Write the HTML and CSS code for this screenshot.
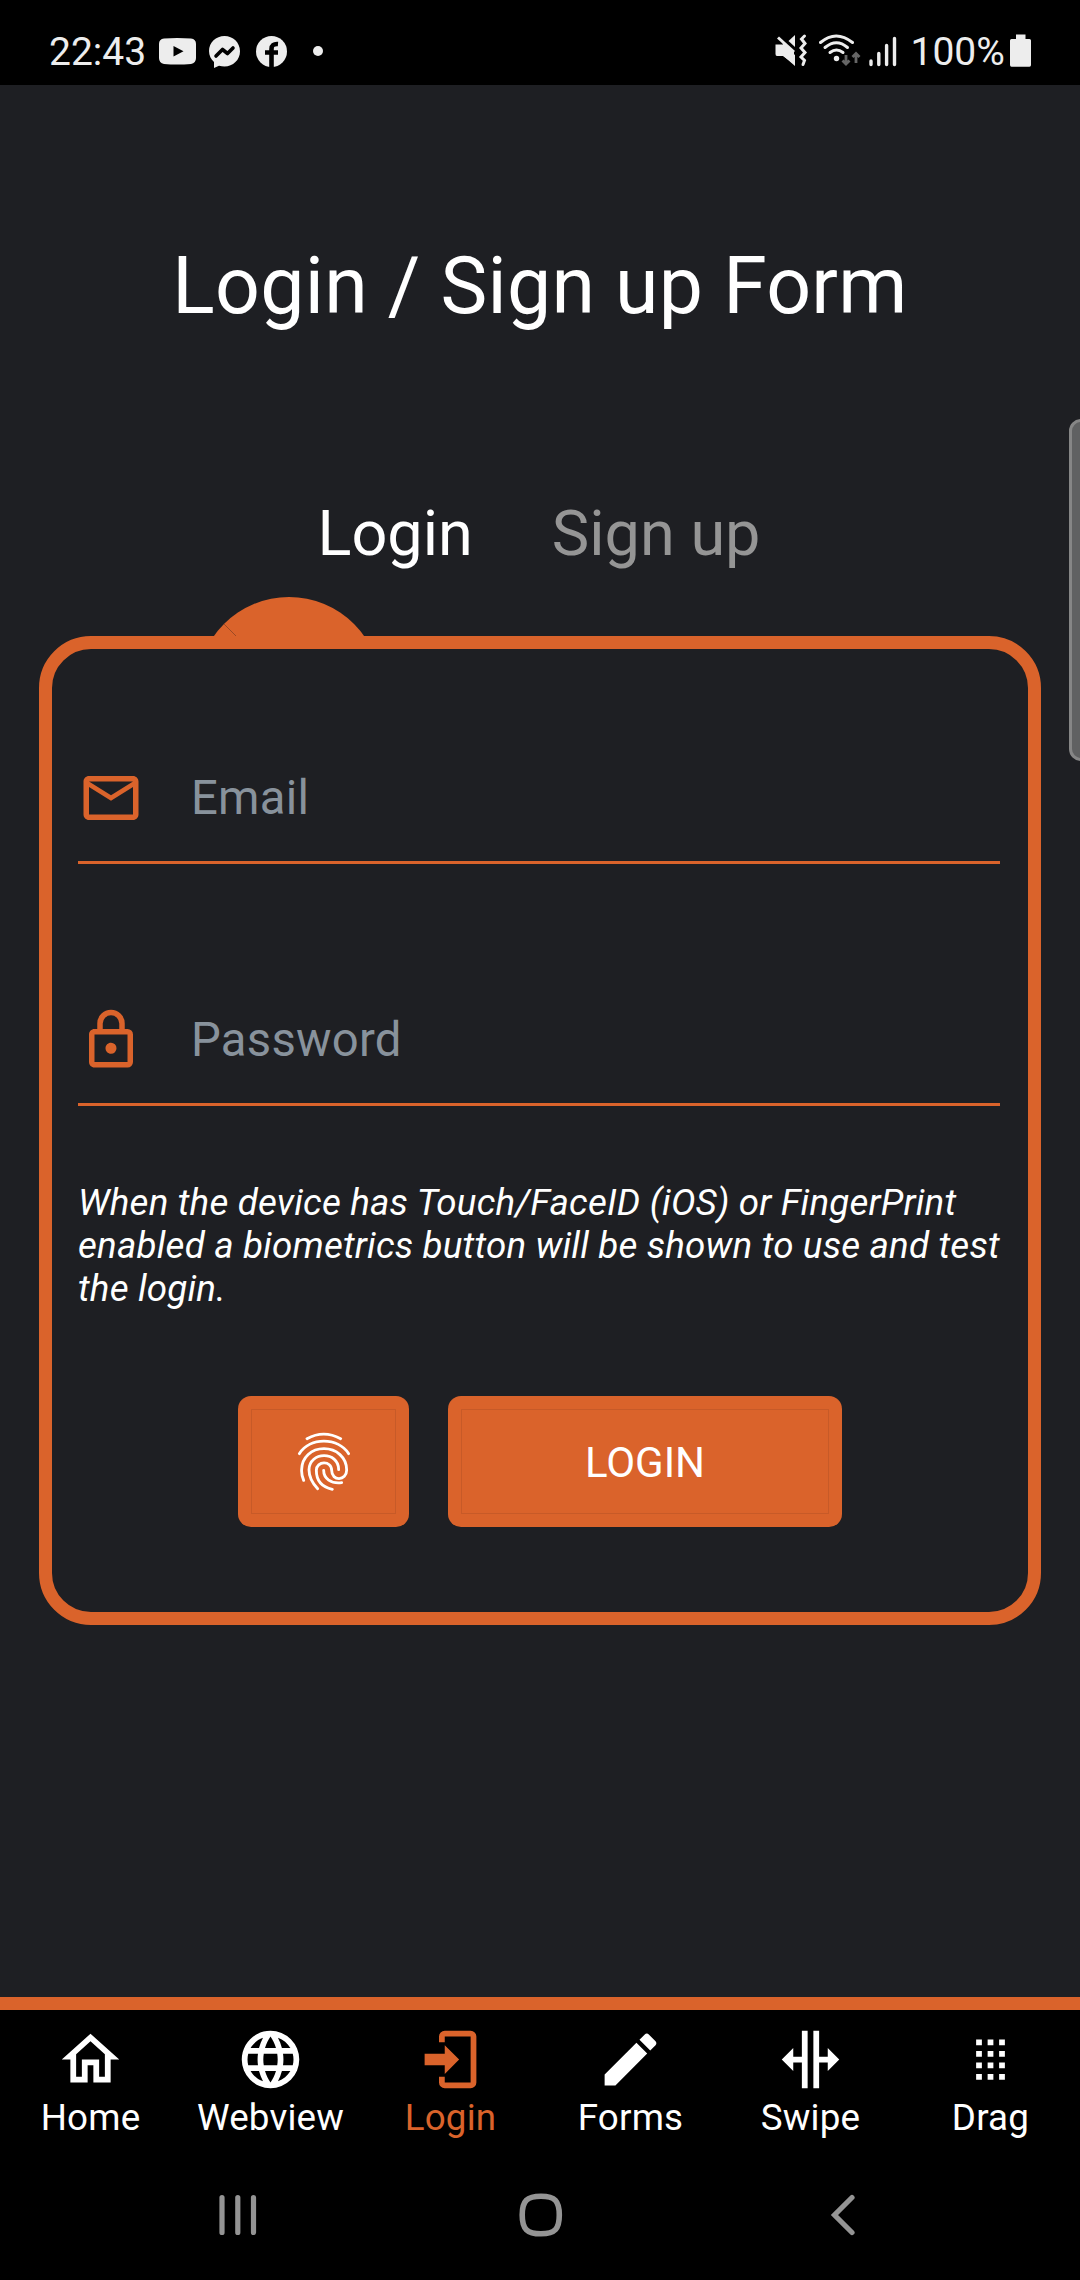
FILE: index.html
```html
<!DOCTYPE html>
<html lang="en">
<head>
<meta charset="utf-8">
<title>Login / Sign up Form</title>
<link rel="stylesheet" href="styles.css">
</head>
<body>
<div class="screen">
  <header class="status">
    <span class="clock">22:43</span>
    <svg class="status-left" width="170" height="34" viewBox="158 35 170 34" fill="#ededed">
      <path d="M164 38.5Q177 37.6 191 38.5Q196 39 196 44V58Q196 63 191 64Q177 65 164 64Q159 63 159 58V44Q159 39 164 38.5ZM173.5 46V56.500L183.500 51.200Z"/>
      <path d="M224.500 36C216 36 209 42.500 209 51C209 55.500 211 59.500 214 62V68L219 65.800C221 66.300 222.500 66.500 224.500 66.500C233 66.500 240 60 240 51.300C240 42.500 233 36 224.500 36Z"/>
      <path d="M216 56L222.500 49.500L227.500 53.500L233 48" fill="none" stroke="#000" stroke-width="3.600" stroke-linecap="round" stroke-linejoin="round"/>
      <circle cx="271.500" cy="51.500" r="15.500"/>
      <path d="M271.500 68V49Q271.500 43.500 278 44M265 52.500H278" fill="none" stroke="#000" stroke-width="4.600"/>
      <circle cx="318" cy="51" r="5"/>
    </svg>
    <svg class="status-right" width="124" height="36" viewBox="774 33 124 36" fill="#ededed">
      <path d="M775.500 44.500H783L795 55V66L783.500 56H777Q775.500 56 775.500 54Z"/>
      <path d="M779 38L794 52V64L783 56V44Z"/>
      <path d="M778 37.500L794 52" stroke="#ededed" stroke-width="3"/>
      <path d="M788.500 41L795 35V47Z"/>
      <path d="M804.500 36L801.500 39L805 43.500L801 48L805 52.500L801 57L804.500 60.500L803 64.500" fill="none" stroke="#ededed" stroke-width="3" stroke-linecap="round"/>
      <g fill="none" stroke="#ededed" stroke-width="3" stroke-linecap="round">
        <path d="M820.500 42.500Q836 29.500 852.500 42.500"/>
        <path d="M825 47.500Q836.500 38 847.500 47.500"/>
        <path d="M830 52.500Q836.500 47.500 843 52.500"/>
      </g>
      <circle cx="836.500" cy="58.500" r="2.700"/>
      <path d="M846 55V64M842.500 60.500L846 64L849.500 60.500M856 63V53.500M852.500 57L856 53.500L859.500 57" fill="none" stroke="#666" stroke-width="2.800"/>
      <path d="M871 61V64.500M878.800 53.500V64.500M886.600 45.500V64.500M894.500 38.500V64.500" stroke="#ededed" stroke-width="3.400" stroke-linecap="round"/>
    </svg>
    <span class="percent">100%</span>
    <svg class="battery" width="22" height="34" viewBox="0 0 22 34" fill="#ededed"><path d="M6 0.500H15.500V5H19.500Q21 5 21 6.500V31Q21 32.800 19.500 32.800H1.500Q0 32.800 0 31V6.500Q0 5 1.500 5H6Z"/></svg>
  </header>

  <main class="content">
    <h1 class="title">Login / Sign up Form</h1>
    <div class="tabs">
      <span class="tab tab-active">Login</span>
      <span class="tab">Sign up</span>
    </div>
    <div class="card-wrap">
      <svg class="bump" width="184" height="184" viewBox="0 0 184 184"><circle cx="92" cy="92" r="92" fill="#da632b"/><path d="M27 27L39 39" stroke="#8a4424" stroke-width=".8"/></svg>
      <section class="card">
        <div class="field">
          <svg width="66" height="66" viewBox="0 0 24 24"><path d="M20 4H4C2.900 4 2 4.900 2 6V18C2 19.100 2.900 20 4 20H20C21.100 20 22 19.100 22 18V6C22 4.900 21.100 4 20 4M20 18H4V8L12 13L20 8V18M20 6L12 11L4 6V6H20V6Z"/></svg>
          <span>Email</span>
        </div>
        <div class="field">
          <svg width="66" height="66" viewBox="0 0 24 24"><path d="M12 17C10.890 17 10 16.100 10 15C10 13.890 10.890 13 12 13A2 2 0 0 1 14 15A2 2 0 0 1 12 17M18 20V10H6V20H18M18 8A2 2 0 0 1 20 10V20A2 2 0 0 1 18 22H6C4.890 22 4 21.100 4 20V10C4 8.890 4.890 8 6 8H7V6A5 5 0 0 1 12 1A5 5 0 0 1 17 6V8H18M12 3A3 3 0 0 0 9 6V8H15V6A3 3 0 0 0 12 3Z"/></svg>
          <span>Password</span>
        </div>
        <p class="hint">When the device has Touch/FaceID (iOS) or FingerPrint<br>enabled a biometrics button will be shown to use and test<br>the login.</p>
        <div class="actions">
          <div class="btn btn-touch"><div class="btn-inner">
            <svg width="54" height="60" viewBox="83 64 162 180" fill="none" stroke="#fff" stroke-width="8.500" stroke-linecap="round">
              <path d="M113 87Q163 60 214 87"/>
              <path d="M90 132C122 82 205 82 238 132"/>
              <path d="M103 212C99 203 96 193 97 179C98 143 126 117 164 117C201 117 232 143 232 181C232 214 187 216 187 182C187 152 141 153 141 182C141 214 160 233 189 239"/>
              <path d="M145 237C128 219 119 202 119 180C120 125 208 123 208 180"/>
              <path d="M163 182C163 207 185 223 217 219"/>
            </svg>
          </div></div>
          <div class="btn btn-login"><div class="btn-inner">LOGIN</div></div>
        </div>
      </section>
    </div>
    <div class="scrollbar"></div>
  </main>

  <nav class="tabbar">
    <div class="item"><svg viewBox="0 0 24 24"><path d="M12 5.690L17 10.190V18H15V12H9V18H7V10.190L12 5.690M12 3L2 12H5V20H11V14H13V20H19V12H22"/></svg><span>Home</span></div>
    <div class="item"><svg viewBox="0 0 24 24"><path d="M16.360,14C16.440,13.340 16.500,12.680 16.500,12C16.500,11.320 16.440,10.660 16.360,10H19.740C19.900,10.640 20,11.310 20,12C20,12.690 19.900,13.360 19.740,14M14.590,19.560C15.190,18.450 15.650,17.250 15.970,16H18.920C17.960,17.650 16.430,18.930 14.590,19.560M14.340,14H9.660C9.560,13.340 9.500,12.680 9.500,12C9.500,11.320 9.560,10.650 9.660,10H14.340C14.430,10.650 14.500,11.320 14.500,12C14.500,12.680 14.430,13.340 14.340,14M12,19.960C11.170,18.760 10.500,17.430 10.090,16H13.910C13.500,17.430 12.830,18.760 12,19.960M8,8H5.080C6.030,6.340 7.570,5.060 9.400,4.440C8.800,5.550 8.350,6.750 8,8M5.080,16H8C8.350,17.250 8.800,18.450 9.400,19.560C7.570,18.930 6.030,17.650 5.080,16M4.260,14C4.100,13.360 4,12.690 4,12C4,11.310 4.100,10.640 4.260,10H7.640C7.560,10.660 7.500,11.320 7.500,12C7.500,12.680 7.560,13.340 7.640,14M12,4.030C12.830,5.230 13.500,6.570 13.910,8H10.090C10.500,6.570 11.170,5.230 12,4.030M18.920,8H15.970C15.650,6.750 15.190,5.550 14.590,4.440C16.430,5.070 17.960,6.340 18.920,8M12,2C6.470,2 2,6.500 2,12A10,10 0 0,0 12,22A10,10 0 0,0 22,12A10,10 0 0,0 12,2Z"/></svg><span>Webview</span></div>
    <div class="item item-active"><svg viewBox="0 0 24 24"><path d="M10 17V14H3V10H10V7L15 12L10 17M10 2H19A2 2 0 0 1 21 4V20A2 2 0 0 1 19 22H10A2 2 0 0 1 8 20V18H10V20H19V4H10V6H8V4A2 2 0 0 1 10 2Z"/></svg><span>Login</span></div>
    <div class="item"><svg viewBox="0 0 24 24"><path d="M20.710,7.040C21.100,6.650 21.100,6 20.710,5.630L18.370,3.290C18,2.900 17.350,2.900 16.960,3.290L15.120,5.120L18.870,8.870M3,17.250V21H6.750L17.810,9.930L14.060,6.180L3,17.250Z"/></svg><span>Forms</span></div>
    <div class="item"><svg viewBox="0 0 24 24"><path d="M9 2H11V22H9V13H6V16L2 12L6 8V11H9ZM13 2H15V11H18V8L22 12L18 16V13H15V22H13Z"/></svg><span>Swipe</span></div>
    <div class="item"><svg viewBox="0 0 24 24"><path d="M7 5H9V7H7ZM11 5H13V7H11ZM15 5H17V7H15ZM7 9H9V11H7ZM11 9H13V11H11ZM15 9H17V11H15ZM7 13H9V15H7ZM11 13H13V15H11ZM15 13H17V15H15ZM7 17H9V19H7ZM11 17H13V19H11ZM15 17H17V19H15Z"/></svg><span>Drag</span></div>
  </nav>

  <footer class="sysnav">
    <svg width="38" height="42" viewBox="0 0 38 42"><path d="M3 3.500V38.500M18.800 3.500V38.500M34.500 3.500V38.500" stroke-width="5.200"/></svg>
    <svg width="44" height="44" viewBox="0 0 44 44"><path d="M22 3.200C36 3.200 40.300 8 40.300 22C40.300 36 36 40.800 22 40.800C8 40.800 3.200 36 3.200 22C3.200 8 8 3.200 22 3.200Z" stroke-width="5.600"/></svg>
    <svg width="26" height="42" viewBox="0 0 26 42"><path d="M22 3.500L4.500 21L22 38.500" stroke-width="5.200"/></svg>
  </footer>
</div>
</body>
</html>
```
FILE: styles.css
```css
* { box-sizing: border-box; }
body {
  margin: 0;
  background: #000;
  color: #fff;
  font-family: Roboto, sans-serif;
}
.screen {
  width: 1080px;
  height: 2280px;
  display: flex;
  flex-direction: column;
  overflow: hidden;
}
svg { display: block; flex: none; }

.status {
  height: 85px;
  padding: 0 48px 0 49px;
  display: flex;
  align-items: flex-start;
  color: #ededed;
  font-size: 39px;
  line-height: 46px;
}
.clock { width: 110px; padding-top: 29px; }
.status-left { margin-top: 35px; }
.status-right { margin: 33px 12px 0 446px; }
.percent { width: 100px; padding-top: 29px; }
.battery { margin-top: 34px; }

.content {
  position: relative;
  height: 1912px;
  background: #1e1f23;
}
.title {
  margin: 0;
  padding-top: 155px;
  font-size: 78.75px;
  line-height: 92px;
  font-weight: 400;
  letter-spacing: 0.3px;
  text-align: center;
}
.tabs {
  display: flex;
  justify-content: center;
  gap: 79px;
  padding: 165px 2px 0 0;
  font-size: 63px;
  line-height: 74px;
}
.tab { color: #959595; }
.tab-active { color: #fff; }
.card-wrap {
  position: relative;
  margin: 65px 39px 0;
}
.bump {
  position: absolute;
  left: 158px;
  top: -39px;
}
.card {
  position: relative;
  height: 989px;
  border: 13px solid #da632b;
  border-radius: 52px;
  background: #1e1f23;
  padding: 0 28px 0 26px;
}
.field {
  height: 99px;
  margin-top: 143px;
  border-bottom: 3px solid #da632b;
  display: flex;
  gap: 47px;
  color: #88929c;
  font-size: 47.25px;
  line-height: 66px;
  letter-spacing: 0.25px;
}
.field:first-child { margin-top: 116px; }
.field svg { fill: #da632b; }
.hint {
  margin: 75px 0 0;
  font-size: 36.75px;
  line-height: 43px;
  font-style: italic;
  letter-spacing: 0.18px;
  white-space: nowrap;
}
.actions {
  display: flex;
  justify-content: center;
  gap: 39px;
  margin: 86px -2px 0 0;
}
.btn {
  height: 131px;
  padding: 13px;
  border-radius: 13px;
  background: #da632b;
}
.btn-touch { width: 171px; }
.btn-login { width: 394px; }
.btn-inner {
  height: 105px;
  border: 1px solid #c75a28;
  display: flex;
  align-items: center;
  justify-content: center;
  font-size: 42px;
}
.btn-login .btn-inner { padding-top: 2px; }
.btn-touch .btn-inner { padding-bottom: 1px; }
.scrollbar {
  position: absolute;
  left: 1069px;
  top: 334px;
  width: 24px;
  height: 342px;
  border: 3px solid #868686;
  border-radius: 12px;
  background: #606162;
}

.tabbar {
  height: 156px;
  border-top: 13px solid #da632b;
  display: grid;
  grid-template-columns: repeat(6, 1fr);
}
.item {
  display: flex;
  flex-direction: column;
  align-items: center;
  padding-top: 15px;
  font-size: 36.75px;
  line-height: 43px;
  letter-spacing: 0.2px;
}
.item svg { width: 69px; height: 69px; fill: #fff; }
.item span { margin-top: 2px; padding-left: 1px; }
.item-active { color: #da632b; }
.item-active svg { fill: #da632b; }

.sysnav {
  height: 127px;
  padding: 0 225px 4px 219px;
  display: flex;
  align-items: center;
  gap: 262px;
}
.sysnav svg:last-child { margin-left: 5px; }
.sysnav path {
  fill: none;
  stroke: #949494;
  stroke-linecap: round;
}
```
